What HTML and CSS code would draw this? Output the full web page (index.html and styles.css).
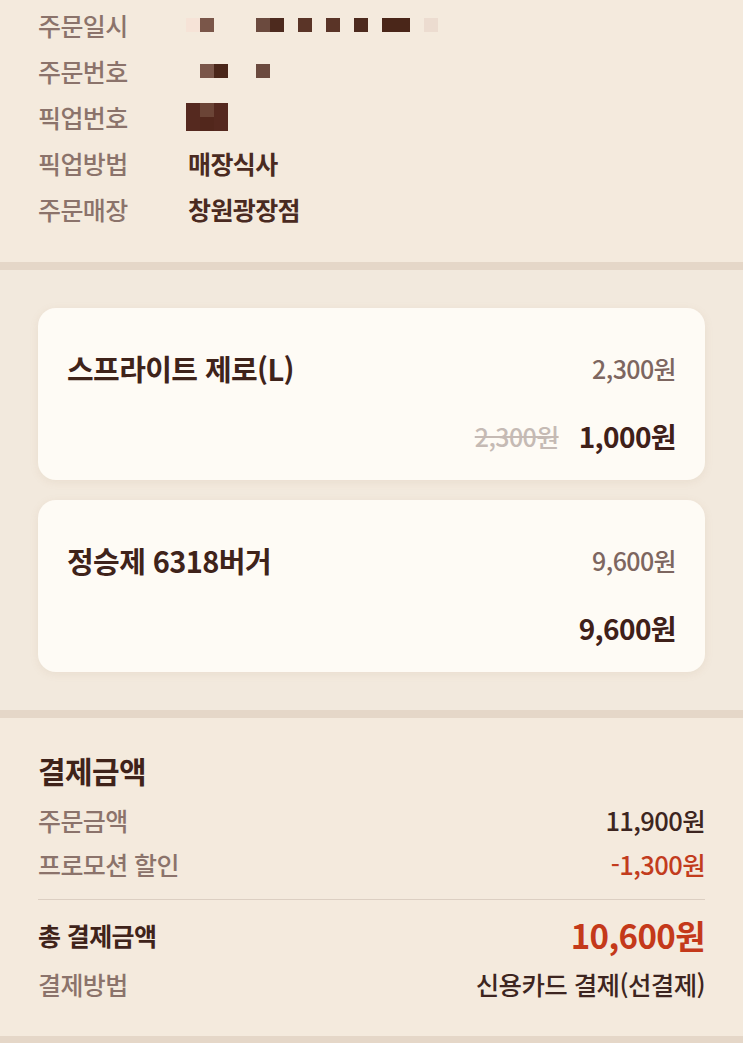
FILE: index.html
```html
<!DOCTYPE html>
<html lang="ko">
<head>
<meta charset="utf-8">
<link rel="stylesheet" href="styles.css">
</head>
<body>
<section class="info">
  <div class="row"><span class="label">주문일시</span>
    <span class="mask">
      <i class="c faint"></i><i class="c m1"></i><i class="c"></i><i class="c"></i><i class="c"></i><i class="c m2"></i><i class="c m3"></i><i class="c"></i><i class="c m4"></i><i class="c"></i><i class="c m4"></i><i class="c"></i><i class="c m3"></i><i class="c"></i><i class="c m5"></i><i class="c m5"></i><i class="c"></i><i class="c light"></i>
    </span>
  </div>
  <div class="row"><span class="label">주문번호</span>
    <span class="mask">
      <i class="c"></i><i class="c m1"></i><i class="c m5"></i><i class="c"></i><i class="c"></i><i class="c m2"></i>
    </span>
  </div>
  <div class="row"><span class="label">픽업번호</span>
    <span class="mask tall">
      <i class="t"></i><i class="t mid"></i><i class="t"></i>
    </span>
  </div>
  <div class="row"><span class="label">픽업방법</span><span class="value">매장식사</span></div>
  <div class="row"><span class="label">주문매장</span><span class="value">창원광장점</span></div>
</section>
<div class="band"></div>
<section class="items">
  <div class="card">
    <div class="card-row">
      <span class="item-name">스프라이트 제로(L)</span>
      <span class="unit-price">2,300원</span>
    </div>
    <div class="card-row end">
      <span class="old-price">2,300원</span>
      <span class="final-price">1,000원</span>
    </div>
  </div>
  <div class="card">
    <div class="card-row">
      <span class="item-name">정승제 6318버거</span>
      <span class="unit-price">9,600원</span>
    </div>
    <div class="card-row end">
      <span class="final-price">9,600원</span>
    </div>
  </div>
</section>
<div class="band"></div>
<section class="pay">
  <h2 class="pay-title">결제금액</h2>
  <div class="pay-row"><span class="label">주문금액</span><span class="amount">11,900원</span></div>
  <div class="pay-row"><span class="label">프로모션 할인</span><span class="amount red">-1,300원</span></div>
  <div class="divider"></div>
  <div class="pay-row total"><span class="total-label">총 결제금액</span><span class="total-amount">10,600원</span></div>
  <div class="pay-row method"><span class="label">결제방법</span><span class="amount">신용카드 결제(선결제)</span></div>
</section>
<div class="band"></div>
</body>
</html>
```

FILE: styles.css
```css
* { box-sizing: border-box; margin: 0; padding: 0; }
body {
  margin: 0;
  background: #f4eadd;
  font-family: "Noto Sans CJK KR", "Noto Sans", sans-serif;
  color: #4a2a21;
  width: 743px;
}
.info {
  padding: 2px 38px 30px;
  background: #f4eadd;
}
.row {
  display: flex;
  align-items: center;
  height: 46px;
}
.label {
  font-size: 25px;
  font-weight: 500;
  color: #8b736b;
  letter-spacing: -0.6px;
  line-height: 1;
}
.row .label { width: 150px; }
.value {
  font-size: 25px;
  font-weight: 700;
  color: #4a2a21;
  letter-spacing: -0.6px;
  line-height: 1;
}
.mask {
  display: flex;
  margin-left: -2px;
}
.c {
  display: block;
  width: 14px;
  height: 14px;
}
.faint { background: #f6e3d7; }
.light { background: #ecdcd0; }
.m1 { background: #7a5649; }
.m2 { background: #6b4a3e; }
.m3 { background: #4d2a1e; }
.m4 { background: #5a3427; }
.m5 { background: #4a2619; }
.tall .t {
  display: block;
  width: 14px;
  height: 28px;
  background: #55291f;
}
.tall .mid { background: linear-gradient(#6b4436 0 50%, #52271c 50% 100%); }
.band {
  height: 8px;
  background: #e5d7c8;
}
.items {
  background: #f2e9dd;
  padding: 38px 38px;
  display: flex;
  flex-direction: column;
  gap: 20px;
}
.card {
  background: #fefbf5;
  border-radius: 18px;
  padding: 40px 29px 24px;
  display: flex;
  flex-direction: column;
  gap: 28px;
  box-shadow: 0 2px 8px rgba(170, 140, 110, 0.12);
}
.card-row {
  display: flex;
  justify-content: space-between;
  align-items: center;
  height: 40px;
}
.card-row.end {
  justify-content: flex-end;
  gap: 20px;
}
.item-name {
  font-size: 29px;
  font-weight: 700;
  color: #3f231a;
  letter-spacing: -0.6px;
  line-height: 1;
}
.unit-price {
  font-size: 25px;
  font-weight: 500;
  color: #7d6660;
  letter-spacing: -0.6px;
  line-height: 1;
}
.old-price {
  font-size: 25px;
  font-weight: 500;
  color: #c5bab4;
  text-decoration: line-through;
  letter-spacing: -0.6px;
  line-height: 1;
}
.final-price {
  font-size: 28px;
  font-weight: 700;
  color: #3f2019;
  letter-spacing: -0.6px;
  line-height: 1;
}
.pay {
  padding: 32px 38px 30px;
  background: #f4eadd;
}
.pay-title {
  font-size: 30px;
  font-weight: 700;
  color: #3f231a;
  height: 40px;
  line-height: 40px;
  margin-bottom: 8px;
  letter-spacing: -0.6px;
}
.pay-row {
  display: flex;
  justify-content: space-between;
  align-items: center;
  height: 44px;
}
.amount {
  font-size: 25.5px;
  font-weight: 500;
  color: #3d2520;
  letter-spacing: -0.6px;
  line-height: 1;
}
.amount.red { color: #c23c1d; }
.divider {
  height: 1px;
  background: #dccfc2;
  margin-top: 13px;
}
.pay-row.total {
  margin-top: 12px;
  height: 46px;
}
.total-label {
  font-size: 25px;
  font-weight: 700;
  color: #3f231a;
  letter-spacing: -0.6px;
  line-height: 1;
}
.total-amount {
  font-size: 33px;
  font-weight: 700;
  color: #c4391a;
  letter-spacing: -0.6px;
  line-height: 1;
}
.pay-row.method { margin-top: 4px; }
```
